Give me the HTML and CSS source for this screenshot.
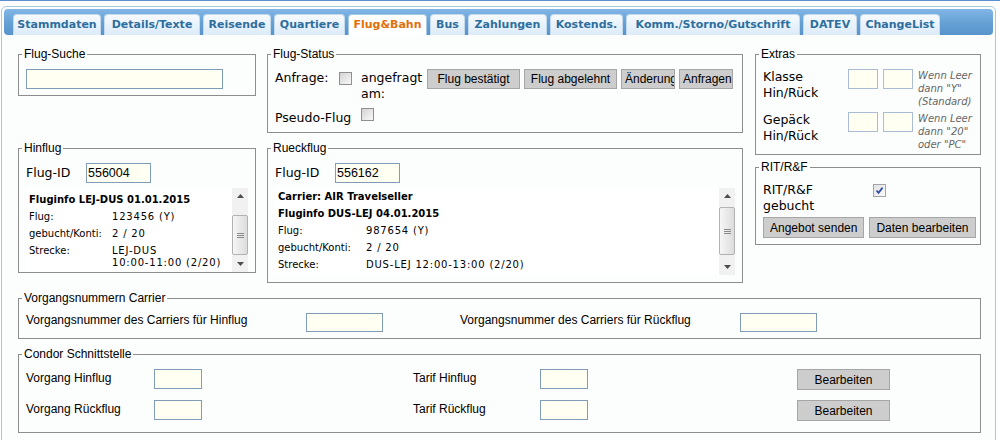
FILE: index.html
```html
<!DOCTYPE html>
<html lang="de">
<head>
    <meta charset="UTF-8">
    <meta name="viewport" content="width=device-width, initial-scale=1.0">
    <title>Flug&amp;Bahn</title>
    <link rel="stylesheet" href="styles.css">
</head>
<body>
    <div class="topline"></div>
    <div class="tabs">
        <ul class="tab-nav">
            <li>Stammdaten</li>
            <li>Details/Texte</li>
            <li>Reisende</li>
            <li>Quartiere</li>
            <li class="active">Flug&amp;Bahn</li>
            <li>Bus</li>
            <li>Zahlungen</li>
            <li>Kostends.</li>
            <li>Komm./Storno/Gutschrift</li>
            <li>DATEV</li>
            <li>ChangeList</li>
        </ul>

        <div class="panel">
            <fieldset class="fs-suche">
                <legend>Flug-Suche</legend>
                <input type="text" class="txt txt-suche">
            </fieldset>

            <fieldset class="fs-status">
                <legend>Flug-Status</legend>
                <div class="status-row">
                    <span class="lbl">Anfrage:</span>
                    <span class="chk"></span>
                    <span class="lbl">angefragt<br>am:</span>
                    <div class="status-buttons">
                        <button class="btn btn-status">Flug bestätigt</button>
                        <button class="btn btn-status">Flug abgelehnt</button>
                        <button class="btn btn-status btn-short">Änderung</button>
                        <button class="btn btn-status btn-short">Anfragen</button>
                    </div>
                </div>
                <div class="pseudo-row">
                    <span class="lbl">Pseudo-Flug</span>
                    <span class="chk"></span>
                </div>
            </fieldset>

            <div class="side">
                <fieldset class="fs-extras">
                    <legend>Extras</legend>
                    <div class="extras-row">
                        <span class="lbl">Klasse<br>Hin/Rück</span>
                        <input type="text" class="txt txt-small">
                        <input type="text" class="txt txt-small">
                        <span class="hint">Wenn Leer<br>dann "Y"<br>(Standard)</span>
                    </div>
                    <div class="extras-row">
                        <span class="lbl">Gepäck<br>Hin/Rück</span>
                        <input type="text" class="txt txt-small">
                        <input type="text" class="txt txt-small">
                        <span class="hint">Wenn Leer<br>dann "20"<br>oder "PC"</span>
                    </div>
                </fieldset>

                <fieldset class="fs-rit">
                    <legend>RIT/R&amp;F</legend>
                    <div class="rit-row">
                        <span class="lbl">RIT/R&amp;F<br>gebucht</span>
                        <span class="chk checked">
                            <svg width="11" height="11" viewBox="0 0 11 11"><polyline points="2.5,5.5 4.5,7.8 8.6,2.6" fill="none" stroke="#2b4fa6" stroke-width="1.7"/></svg>
                        </span>
                    </div>
                    <div class="rit-buttons">
                        <button class="btn">Angebot senden</button>
                        <button class="btn">Daten bearbeiten</button>
                    </div>
                </fieldset>
            </div>

            <fieldset class="fs-hin">
                <legend>Hinflug</legend>
                <div class="flug-id">
                    <span class="lbl">Flug-ID</span>
                    <input type="text" class="txt txt-id" value="556004">
                </div>
                <div class="info info-hin">
                    <div class="info-body">
                        <table>
                            <tr><td class="head" colspan="2">Fluginfo LEJ-DUS 01.01.2015</td></tr>
                            <tr><td class="key">Flug:</td><td>123456 (Y)</td></tr>
                            <tr><td class="key">gebucht/Konti:</td><td>2 / 20</td></tr>
                            <tr><td class="key">Strecke:</td><td>LEJ-DUS<br>10:00-11:00 (2/20)</td></tr>
                        </table>
                    </div>
                    <div class="sb">
                        <span class="sb-btn">
                            <svg width="7" height="4" viewBox="0 0 7 4"><polygon points="0,4 3.5,0 7,4" fill="#4d4d4d"/></svg>
                        </span>
                        <span class="sb-track">
                            <span class="sb-thumb thumb-hin">
                                <svg width="7" height="7" viewBox="0 0 7 7"><path d="M0 1.5h7M0 3.5h7M0 5.5h7" stroke="#8a8a8a" stroke-width="1"/></svg>
                            </span>
                        </span>
                        <span class="sb-btn">
                            <svg width="7" height="4" viewBox="0 0 7 4"><polygon points="0,0 7,0 3.5,4" fill="#4d4d4d"/></svg>
                        </span>
                    </div>
                </div>
            </fieldset>

            <fieldset class="fs-rueck">
                <legend>Rueckflug</legend>
                <div class="flug-id">
                    <span class="lbl">Flug-ID</span>
                    <input type="text" class="txt txt-id" value="556162">
                </div>
                <div class="info info-rueck">
                    <div class="info-body">
                        <table>
                            <tr><td class="head" colspan="2">Carrier: AIR Travelseller</td></tr>
                            <tr><td class="head" colspan="2">Fluginfo DUS-LEJ 04.01.2015</td></tr>
                            <tr><td class="key">Flug:</td><td>987654 (Y)</td></tr>
                            <tr><td class="key">gebucht/Konti:</td><td>2 / 20</td></tr>
                            <tr><td class="key">Strecke:</td><td>DUS-LEJ 12:00-13:00 (2/20)</td></tr>
                        </table>
                    </div>
                    <div class="sb">
                        <span class="sb-btn">
                            <svg width="7" height="4" viewBox="0 0 7 4"><polygon points="0,4 3.5,0 7,4" fill="#4d4d4d"/></svg>
                        </span>
                        <span class="sb-track">
                            <span class="sb-thumb thumb-rueck">
                                <svg width="7" height="7" viewBox="0 0 7 7"><path d="M0 1.5h7M0 3.5h7M0 5.5h7" stroke="#8a8a8a" stroke-width="1"/></svg>
                            </span>
                        </span>
                        <span class="sb-btn">
                            <svg width="7" height="4" viewBox="0 0 7 4"><polygon points="0,0 7,0 3.5,4" fill="#4d4d4d"/></svg>
                        </span>
                    </div>
                </div>
            </fieldset>

            <fieldset class="fs-wide fs-vnr">
                <legend>Vorgangsnummern Carrier</legend>
                <div class="vnr-row">
                    <span class="plain">Vorgangsnummer des Carriers für Hinflug</span>
                    <input type="text" class="txt txt-vnr">
                    <span class="plain">Vorgangsnummer des Carriers für Rückflug</span>
                    <input type="text" class="txt txt-vnr">
                </div>
            </fieldset>

            <fieldset class="fs-wide fs-condor">
                <legend>Condor Schnittstelle</legend>
                <div class="condor-grid">
                    <span class="plain">Vorgang Hinflug</span>
                    <input type="text" class="txt txt-cnd">
                    <span class="plain">Tarif Hinflug</span>
                    <input type="text" class="txt txt-cnd">
                    <button class="btn btn-edit">Bearbeiten</button>

                    <span class="plain">Vorgang Rückflug</span>
                    <input type="text" class="txt txt-cnd">
                    <span class="plain">Tarif Rückflug</span>
                    <input type="text" class="txt txt-cnd">
                    <button class="btn btn-edit">Bearbeiten</button>
                </div>
            </fieldset>
        </div>
    </div>
</body>
</html>
```

FILE: styles.css
```css
body {
    margin: 0;
    font-family: "Liberation Sans", Arial, sans-serif;
    font-size: 12px;
    color: #000;
    background-color: #fff;
}
.topline {
    height: 1px;
    background-color: #5b8fcf;
}

/* tab widget */
.tabs {
    margin: 5px 4px 0 1px;
    padding: 2px;
    min-height: 470px;
    border: 1px solid #a6c9e2;
    border-radius: 5px;
    background-color: #fcfdfd;
}
.tab-nav {
    list-style: none;
    margin: 0;
    padding: 5px 0 0 9px;
    display: grid;
    grid-template-columns: 88px 96px 68px 71px 79px 35px 79px 73px 174px 54px 80px;
    column-gap: 3px;
    background: linear-gradient(#82b6e6, #64a0d4 55%, #5894cc);
    border-radius: 4px;
}
.tab-nav li {
    height: 20px;
    border: 1px solid #c5dbec;
    border-bottom: none;
    border-radius: 4px 4px 0 0;
    background: linear-gradient(#f6fafe, #dcebf8);
    color: #2e6e9e;
    font: bold 11px "DejaVu Sans", Verdana, sans-serif;
    line-height: 20px;
    text-align: center;
    white-space: nowrap;
}
.tab-nav li.active {
    background: #fff;
    border-color: #a6c9e2;
    color: #e17009;
}

/* content grid */
.panel {
    display: grid;
    grid-template-columns: 238px 476px 227px;
    column-gap: 11px;
    row-gap: 8px;
    align-items: start;
    padding: 12px 0 20px 14px;
}
fieldset {
    margin: 0;
    padding: 8px 7px 6px;
    border: 1px solid #8d8d8d;
    min-width: 0;
}
legend {
    margin-left: -4px;
    padding: 0 2px;
    font-size: 12px;
    line-height: 14px;
}
.lbl {
    font-family: "DejaVu Sans", Verdana, sans-serif;
    font-size: 12.5px;
    line-height: 16px;
}
.plain {
    line-height: 14px;
}

/* form controls */
.txt {
    box-sizing: border-box;
    display: block;
    height: 20px;
    margin: 0;
    padding: 0 1px;
    border: 1px solid #7f9db9;
    background-color: #fffff2;
    font-family: "Liberation Sans", Arial, sans-serif;
    font-size: 12.5px;
    color: #000;
}
.txt-suche { width: 197px; }
.txt-id { width: 65px; }
.txt-small { width: 30px; border-color: #a9bcd3; }
.txt-vnr { width: 77px; height: 19px; }
.txt-cnd { width: 48px; }

.btn {
    height: 21px;
    margin: 0;
    padding: 0 6px;
    border: 1px solid #a6a6a6;
    background-color: #cdcdcd;
    font-family: "Liberation Sans", Arial, sans-serif;
    font-size: 12px;
    color: #000;
    white-space: nowrap;
}
.btn-status {
    width: 93px;
    height: 20px;
    padding: 0;
}
.btn-short {
    width: 54px;
    padding: 0 0 0 3px;
    text-align: left;
    overflow: hidden;
}
.btn-edit {
    width: 93px;
}
.chk {
    display: block;
    width: 11px;
    height: 11px;
    border: 1px solid #8f8f8f;
    background: linear-gradient(135deg, #d4d4d4, #f8f8f8);
}
.chk.checked {
    border-color: #a4a4a4;
    background: linear-gradient(135deg, #e2e2e2, #fbfbfb);
}
.chk svg {
    display: block;
}

/* Flug-Status */
.status-row {
    display: grid;
    grid-template-columns: 64px 22px 66px auto;
    align-items: start;
}
.status-row .lbl {
    margin-top: 1px;
}
.status-row .chk {
    margin-top: 3px;
}
.status-buttons {
    display: flex;
    gap: 4px;
}
.pseudo-row {
    display: flex;
    align-items: flex-start;
    margin-top: 6px;
}
.pseudo-row .lbl {
    margin-top: 2px;
}
.pseudo-row .chk {
    margin-left: 10px;
}

/* right column */
.side {
    grid-column: 3;
    grid-row: 1 / span 2;
    margin-left: 1px;
    display: flex;
    flex-direction: column;
    gap: 5px;
}
.fs-extras {
    padding-bottom: 3px;
}
.extras-row {
    display: grid;
    grid-template-columns: 80px 30px 30px auto;
    column-gap: 5px;
    align-items: start;
}
.extras-row + .extras-row {
    margin-top: 4px;
}
.hint {
    font: italic 10px "DejaVu Sans", Verdana, sans-serif;
    line-height: 13px;
    color: #666;
    white-space: nowrap;
}
.rit-row {
    display: grid;
    grid-template-columns: 110px auto;
    align-items: start;
}
.rit-row .chk {
    margin-top: 2px;
}
.rit-buttons {
    display: flex;
    gap: 5px;
    margin-top: 3px;
}

/* Hinflug / Rueckflug */
.fs-hin {
    padding-bottom: 0;
}
.fs-rueck {
    padding-bottom: 7px;
}
.flug-id {
    display: flex;
    align-items: center;
}
.flug-id .lbl {
    width: 60px;
}
.info {
    display: flex;
    margin-top: 5px;
    background-color: #fff;
}
.info-hin { height: 84px; }
.info-rueck { height: 87px; }
.info-body {
    flex: 1;
    overflow: hidden;
}
.info-hin .info-body {
    padding-top: 3px;
}
.info table {
    border-collapse: collapse;
    font-family: "DejaVu Sans", Verdana, sans-serif;
    font-size: 10px;
    line-height: 12px;
}
.info td {
    padding: 3px 0 2px 3px;
    vertical-align: top;
    white-space: nowrap;
}
.info td + td {
    padding-left: 0;
    letter-spacing: 0.8px;
}
.info td.head {
    font-weight: bold;
}
.info-hin td.key { width: 83px; }
.info-rueck td.key { width: 88px; }

.sb {
    width: 16px;
    display: flex;
    flex-direction: column;
    background-color: #f1f1f1;
}
.sb-btn {
    height: 16px;
    display: flex;
    align-items: center;
    justify-content: center;
}
.sb-track {
    flex: 1;
}
.sb-thumb {
    box-sizing: border-box;
    display: flex;
    align-items: center;
    justify-content: center;
    border: 1px solid #b2b2b2;
    border-radius: 2px;
    background: linear-gradient(90deg, #f6f6f6, #dcdcdc);
}
.thumb-hin {
    margin-top: 11px;
    height: 40px;
}
.thumb-rueck {
    margin-top: 3px;
    height: 48px;
}

/* bottom blocks */
.fs-wide {
    grid-column: 1 / -1;
}
.vnr-row {
    display: grid;
    grid-template-columns: 280px 154px 280px auto;
    align-items: start;
}
.fs-condor {
    padding-bottom: 11px;
}
.condor-grid {
    display: grid;
    grid-template-columns: 128px 259px 127px 257px auto;
    row-gap: 10px;
    align-items: start;
}
.condor-grid .plain {
    margin-top: 2px;
}
```
